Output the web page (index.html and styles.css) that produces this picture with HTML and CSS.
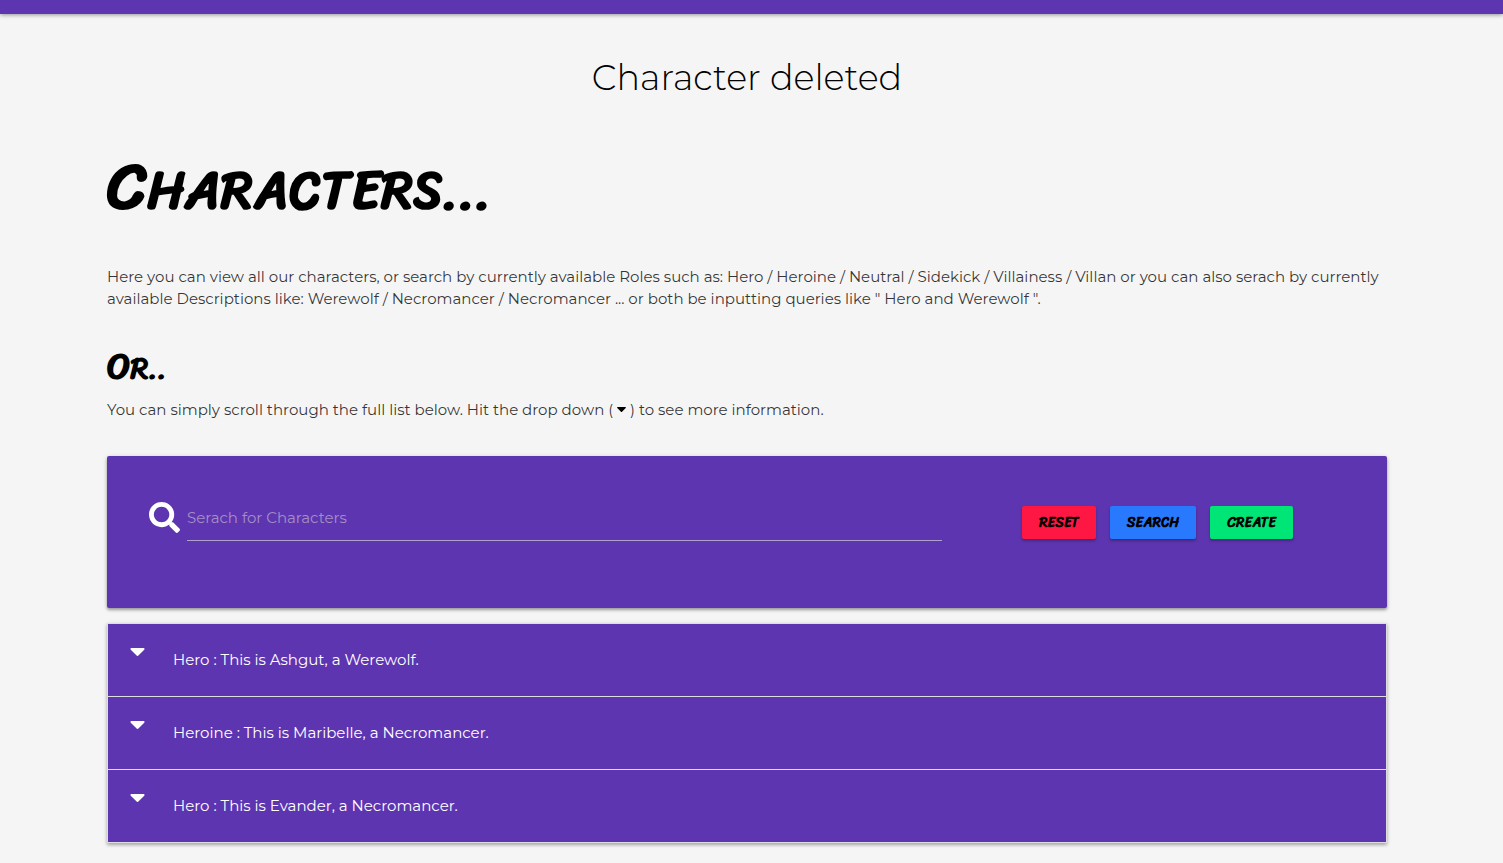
FILE: index.html
```html
<!DOCTYPE html>
<html lang="en">
<head>
<meta charset="utf-8">
<meta name="viewport" content="width=device-width, initial-scale=1">
<title>Characters</title>
<link rel="stylesheet" href="styles.css">
</head>
<body>
<header class="topbar"></header>
<div class="page">
<h4 class="flash">Character deleted</h4>
<main class="container">
  <h1 class="title">Characters...</h1>
  <p class="text">Here you can view all our characters, or search by currently available Roles such as: Hero / Heroine / Neutral / Sidekick / Villainess / Villan or you can also serach by currently available Descriptions like: Werewolf / Necromancer / Necromancer ... or both be inputting queries like " Hero and Werewolf ".</p>
  <h2 class="subtitle">Or..</h2>
  <p class="text">You can simply scroll through the full list below. Hit the drop down ( <svg class="caret-small" viewBox="0 0 16 9" aria-hidden="true"><path d="M1.2 0h13.6c1 0 1.500 1.200.8 1.900L9 8.500a1.400 1.400 0 0 1-2 0L.4 1.900C-.3 1.200.2 0 1.200 0z"/></svg> ) to see more information.</p>

  <form class="search-card">
    <div class="field">
      <label for="query" aria-label="Search"><svg class="search-icon" viewBox="0 0 512 512" aria-hidden="true"><path d="M505 442.700L405.300 343c-4.500-4.500-10.600-7-17-7H372c27.600-35.300 44-79.700 44-128C416 93.100 322.900 0 208 0S0 93.100 0 208s93.100 208 208 208c48.300 0 92.700-16.400 128-44v16.300c0 6.400 2.500 12.500 7 17l99.700 99.700c9.400 9.400 24.600 9.400 33.900 0l28.300-28.300c9.400-9.400 9.400-24.600.1-34zM208 336c-70.700 0-128-57.200-128-128 0-70.700 57.200-128 128-128 70.700 0 128 57.200 128 128 0 70.700-57.200 128-128 128z"/></svg></label>
      <input class="query" id="query" type="text" placeholder="Serach for Characters">
    </div>
    <div class="actions">
      <button class="btn btn-reset" type="reset">Reset</button>
      <button class="btn btn-search" type="submit">Search</button>
      <button class="btn btn-create" type="button">Create</button>
    </div>
  </form>

  <ul class="list">
    <li><button class="row" type="button"><svg class="caret" viewBox="0 0 16 9" aria-hidden="true"><path d="M1.200 0h13.600c1 0 1.500 1.200.8 1.900L9 8.500a1.400 1.400 0 0 1-2 0L.4 1.900C-.3 1.200.2 0 1.200 0z"/></svg><span>Hero : This is Ashgut, a Werewolf.</span></button></li>
    <li><button class="row" type="button"><svg class="caret" viewBox="0 0 16 9" aria-hidden="true"><path d="M1.200 0h13.600c1 0 1.500 1.200.8 1.900L9 8.500a1.400 1.400 0 0 1-2 0L.4 1.900C-.3 1.200.2 0 1.200 0z"/></svg><span>Heroine : This is Maribelle, a Necromancer.</span></button></li>
    <li><button class="row" type="button"><svg class="caret" viewBox="0 0 16 9" aria-hidden="true"><path d="M1.200 0h13.600c1 0 1.500 1.200.8 1.900L9 8.500a1.400 1.400 0 0 1-2 0L.4 1.900C-.3 1.200.2 0 1.200 0z"/></svg><span>Hero : This is Evander, a Necromancer.</span></button></li>
  </ul>
</main>
</div>
</body>
</html>
```
FILE: styles.css
```css
* { box-sizing: border-box; }
body {
  margin: 0;
  background: #f5f5f5;
  color: rgba(0, 0, 0, .87);
  font-family: Montserrat, Inter, sans-serif;
  font-size: 15px;
  font-weight: 400;
  line-height: 22px;
}
.topbar {
  height: 14px;
  background: #5e35b1;
  box-shadow: 0 1px 4px rgba(0, 0, 0, .4);
}
.page { padding: 0 9px 16px 0; }
.flash {
  margin: 44px 0 0;
  font-size: 35px;
  font-weight: 300;
  line-height: 40px;
  text-align: center;
  color: #000;
}
.container {
  max-width: 1280px;
  margin: 0 auto;
}
.title, .subtitle, .btn {
  font-family: "Permanent Marker", Sriracha, Lato, sans-serif;
  font-weight: 900;
  color: #000;
  text-transform: uppercase;
}
.title { margin: 52px 0 0; font-size: 54px; line-height: 80px; }
.title::first-letter { font-size: 64px; line-height: 1; }
.subtitle { margin: 38px 0 0; font-size: 30px; line-height: 40px; }
.subtitle::first-letter { font-size: 36px; line-height: 1; }
.text { margin: 0; color: rgba(0, 0, 0, .8); }
.title + .text { margin-top: 36px; }
.subtitle + .text { margin-top: 11px; }
.caret-small { width: 9px; height: 5px; vertical-align: 3px; }
.search-card {
  display: flex;
  align-items: flex-start;
  gap: 80px;
  min-height: 152px;
  margin-top: 35px;
  padding: 40px 94px 0 42px;
  background: #5e35b1;
  border-radius: 2px;
  box-shadow: 0 2px 3px rgba(0, 0, 0, .3), 0 1px 5px rgba(0, 0, 0, .15);
}
.field { flex: 1; display: flex; gap: 7px; }
.search-icon { display: block; width: 31px; height: 31px; margin-top: 6px; fill: #fff; }
.query {
  flex: 1;
  min-width: 0;
  height: 45px;
  padding: 0 0 2px;
  border: 0;
  border-bottom: 1px solid #b0a0cc;
  background: none;
  color: #fff;
  font: inherit;
  outline: 0;
}
.query::placeholder { color: #a48fc4; opacity: 1; }
.actions { display: flex; gap: 14px; padding-top: 10px; }
.btn {
  height: 33px;
  padding: 0 17px;
  border: 0;
  border-radius: 2px;
  font-size: 14px;
  box-shadow: 0 2px 3px rgba(0, 0, 0, .3);
}
.btn-reset { background: #ff1744; }
.btn-search { background: #2979ff; }
.btn-create { background: #00e676; }
.list {
  margin: 15px 0 0;
  padding: 0;
  list-style: none;
  border: 1px solid #ddd;
  border-bottom: 0;
  box-shadow: 0 2px 3px rgba(0, 0, 0, .25), 0 1px 5px rgba(0, 0, 0, .12);
}
.row {
  display: flex;
  align-items: flex-start;
  gap: 28px;
  width: 100%;
  height: 73px;
  padding: 24px 22px;
  border: 0;
  border-bottom: 1px solid #ddd;
  background: #5e35b1;
  color: #fff;
  font: inherit;
  text-align: left;
}
.row span { padding-top: 1px; }
.caret { width: 15px; height: 8px; fill: #fff; }
```
